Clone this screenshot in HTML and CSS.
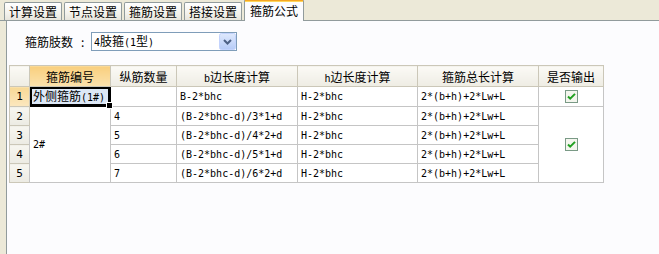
FILE: index.html
```
<!DOCTYPE html>
<html lang="zh">
<head>
<meta charset="UTF-8">
<title>箍筋公式</title>
<link rel="stylesheet" href="styles.css">
</head>
<body>
<div class="tabs">
  <div class="tab">计算设置</div>
  <div class="tab">节点设置</div>
  <div class="tab">箍筋设置</div>
  <div class="tab">搭接设置</div>
  <div class="tab active">箍筋公式</div>
</div>
<div class="panel">
  <div class="field">
    <span class="field-label">箍筋肢数</span>
    <span class="colon">:</span>
    <div class="combo">
      <span class="combo-text"><span class="mono">4</span>肢箍<span class="mono">(1</span>型<span class="mono">)</span></span>
      <span class="combo-btn">
        <svg width="17" height="17" viewBox="0 0 17 17">
          <defs>
            <linearGradient id="btnbg" x1="0" y1="0" x2="0" y2="1">
              <stop offset="0" stop-color="#dfe9fd"/>
              <stop offset="1" stop-color="#b6cbf7"/>
            </linearGradient>
          </defs>
          <rect x="0.5" y="0.5" width="16" height="16" rx="2" fill="url(#btnbg)" stroke="#c3d3fd"/>
          <path d="M5 7 L8.5 10.5 L12 7" fill="none" stroke="#4d6185" stroke-width="2"/>
        </svg>
      </span>
    </div>
  </div>

  <table class="grid">
    <colgroup>
      <col class="c-num"><col class="c-id"><col class="c-qty"><col class="c-b"><col class="c-h"><col class="c-total"><col class="c-out">
    </colgroup>
    <tr class="head">
      <th></th>
      <th class="hot">箍筋编号</th>
      <th>纵筋数量</th>
      <th><span class="mono">b</span>边长度计算</th>
      <th><span class="mono">h</span>边长度计算</th>
      <th>箍筋总长计算</th>
      <th>是否输出</th>
    </tr>
    <tr>
      <td class="num hot">1</td>
      <td class="current">外侧箍筋<span class="mono">(1#)</span><span class="handle"></span></td>
      <td></td>
      <td class="mono">B-2*bhc</td>
      <td class="mono">H-2*bhc</td>
      <td class="mono">2*(b+h)+2*Lw+L</td>
      <td class="check"><svg class="box" width="13" height="13" viewBox="0 0 13 13"><rect x="0.5" y="0.5" width="12" height="12" fill="#f4f6ee" stroke="#7a9a86"/><path d="M3 6.5 L5.2 8.7 L10 3.9" fill="none" stroke="#21a121" stroke-width="2"/></svg></td>
    </tr>
    <tr>
      <td class="num">2</td>
      <td rowspan="4" class="mono">2#</td>
      <td class="mono">4</td>
      <td class="mono">(B-2*bhc-d)/3*1+d</td>
      <td class="mono">H-2*bhc</td>
      <td class="mono">2*(b+h)+2*Lw+L</td>
      <td rowspan="4" class="check"><svg class="box" width="13" height="13" viewBox="0 0 13 13"><rect x="0.5" y="0.5" width="12" height="12" fill="#f4f6ee" stroke="#7a9a86"/><path d="M3 6.5 L5.2 8.7 L10 3.9" fill="none" stroke="#21a121" stroke-width="2"/></svg></td>
    </tr>
    <tr>
      <td class="num">3</td>
      <td class="mono">5</td>
      <td class="mono">(B-2*bhc-d)/4*2+d</td>
      <td class="mono">H-2*bhc</td>
      <td class="mono">2*(b+h)+2*Lw+L</td>
    </tr>
    <tr>
      <td class="num">4</td>
      <td class="mono">6</td>
      <td class="mono">(B-2*bhc-d)/5*1+d</td>
      <td class="mono">H-2*bhc</td>
      <td class="mono">2*(b+h)+2*Lw+L</td>
    </tr>
    <tr>
      <td class="num">5</td>
      <td class="mono">7</td>
      <td class="mono">(B-2*bhc-d)/6*2+d</td>
      <td class="mono">H-2*bhc</td>
      <td class="mono">2*(b+h)+2*Lw+L</td>
    </tr>
  </table>
</div>
</body>
</html>
```

FILE: styles.css
```
body {
  margin: 0;
  height: 254px;
  overflow: hidden;
  background: #ece9d8;
  font-family: "Noto Sans CJK SC", sans-serif;
  font-size: 12px;
  color: #000;
}
.mono {
  font-family: "DejaVu Sans Mono", monospace;
  font-size: 10px;
}

/* tab strip */
.tabs {
  display: flex;
  align-items: flex-end;
  gap: 2px;
  height: 21px;
  padding-left: 4px;
  border-bottom: 1px solid #919b9c;
  box-sizing: border-box;
}
.tab {
  height: 17px;
  line-height: 17px;
  padding: 0 4px;
  border: 1px solid #919b9c;
  border-bottom: none;
  border-radius: 2px 2px 0 0;
  background: linear-gradient(#ffffff, #f3f2ec 60%, #e7e5dc);
  white-space: nowrap;
}
.tab.active {
  height: 20px;
  line-height: 19px;
  margin-bottom: -1px;
  padding: 0 5px;
  border-top: 2px solid #f5a623;
  background: #fcfcfe;
  box-shadow: inset 0 1px 0 #ffd65a;
}

/* panel */
.panel {
  margin-left: 6px;
  height: 233px;
  border-left: 1px solid #919b9c;
  background: #fcfcfe;
  padding: 11px 0 0 2px;
  box-sizing: border-box;
}
.field {
  display: flex;
  align-items: center;
  padding-left: 16px;
  height: 19px;
}
.field-label {
  width: 56px;
}
.colon {
  width: 10px;
}
.combo {
  display: flex;
  align-items: center;
  width: 146px;
  height: 19px;
  border: 1px solid #7f9db9;
  background: #fff;
  box-sizing: border-box;
}
.combo-text {
  flex: 1;
  padding-left: 2px;
  line-height: 17px;
}
.combo-btn {
  display: flex;
  width: 17px;
  height: 17px;
}

/* grid */
.grid {
  margin-top: 14px;
  border-collapse: collapse;
  table-layout: fixed;
  width: 595px;
  background: #fff;
}
.c-num { width: 20px; }
.c-id { width: 81px; }
.c-qty { width: 66px; }
.c-b { width: 121px; }
.c-h { width: 120px; }
.c-total { width: 121px; }
.c-out { width: 65px; }

.grid tr {
  height: 19px;
}
.grid th {
  height: 20px;
  padding: 0;
  font-weight: normal;
  text-align: center;
  border: 1px solid #cbc7b8;
  background: linear-gradient(#fbfaf6, #eeece3);
}
.grid th.hot {
  background: linear-gradient(#f9cf7e, #fbe2ad);
}
.grid td {
  padding: 0 3px;
  border: 1px solid #c5c5c5;
  white-space: nowrap;
  overflow: hidden;
  line-height: 17px;
}
.grid td.num {
  padding: 0;
  text-align: center;
  font-family: "DejaVu Sans Mono", monospace;
  font-size: 11px;
  background: linear-gradient(#f7f6f0, #ecebe3);
  border-color: #cbc7b8;
}
.grid td.num.hot {
  background: linear-gradient(#f8d995, #fbe7bf);
}
.grid td.current {
  position: relative;
  overflow: visible;
  background: #dde8f6;
  border: 1px solid #000;
  box-shadow: inset 0 0 0 2px #000;
}
.handle {
  position: absolute;
  right: -3px;
  bottom: -3px;
  width: 5px;
  height: 5px;
  background: #000;
  border: 1px solid #fff;
}
.grid td.check {
  text-align: center;
  padding: 0;
}
.box {
  display: block;
  margin: 0 auto;
}
```
